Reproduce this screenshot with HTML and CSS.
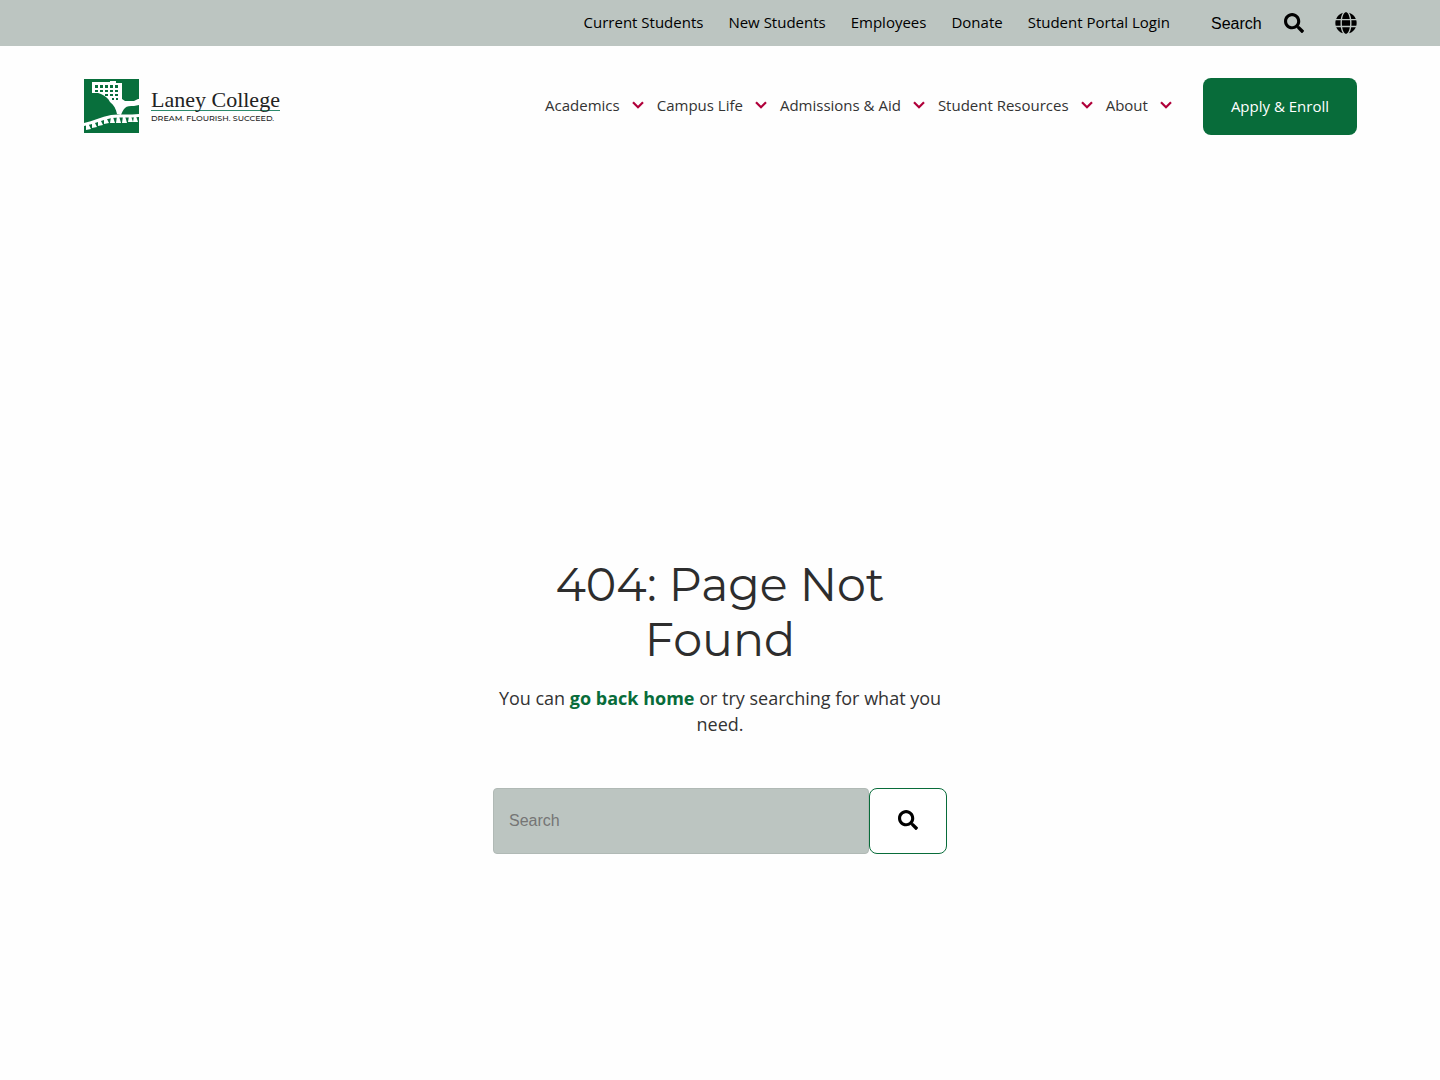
FILE: index.html
```html
<!DOCTYPE html>
<html lang="en">
<head>
    <meta charset="UTF-8">
    <meta name="viewport" content="width=device-width, initial-scale=1.0">
    <title>Page Not Found | Laney College</title>
    <link rel="stylesheet" href="styles.css">
</head>
<body>
    <svg class="sprite" aria-hidden="true">
        <symbol id="icon-search" viewBox="0 0 512 512">
            <path d="M505 442.700 405.300 343c-4.500-4.500-10.600-7-17-7H372c27.600-35.300 44-79.700 44-128C416 93.100 322.900 0 208 0S0 93.100 0 208s93.100 208 208 208c48.300 0 92.700-16.400 128-44v16.300c0 6.400 2.500 12.500 7 17l99.700 99.700c9.400 9.400 24.600 9.400 33.900 0l28.300-28.300c9.400-9.400 9.400-24.600.1-34zM208 336c-70.700 0-128-57.200-128-128 0-70.700 57.200-128 128-128 70.700 0 128 57.200 128 128 0 70.700-57.200 128-128 128z"/>
        </symbol>
        <symbol id="icon-chevron" viewBox="0 0 12 8">
            <path d="M1 1.200 6 6.200 11 1.200" fill="none" stroke="currentColor" stroke-width="2.200"/>
        </symbol>
    </svg>

    <div class="top-bar">
        <nav class="top-links" aria-label="Utility">
            <a href="#">Current Students</a>
            <a href="#">New Students</a>
            <a href="#">Employees</a>
            <a href="#">Donate</a>
            <a href="#">Student Portal Login</a>
        </nav>
        <form class="top-search">
            <input type="text" name="s" placeholder="Search" aria-label="Search the site">
            <button type="submit" aria-label="Submit site search"><svg class="icon"><use href="#icon-search"/></svg></button>
        </form>
        <button type="button" class="language" aria-label="Choose language">
            <svg viewBox="0 0 496 512">
                <path d="M336.500 160C322 70.700 287.800 8 248 8s-74 62.700-88.500 152h177zM152 256c0 22.200 1.200 43.500 3.300 64h185.300c2.100-20.500 3.300-41.800 3.300-64s-1.200-43.500-3.300-64H155.300c-2.100 20.500-3.300 41.800-3.300 64zm324.700-96c-28.600-67.900-86.500-120.400-158-141.600 24.400 33.800 41.200 84.700 50 141.600h108zM177.200 18.400C105.800 39.600 47.800 92.100 19.300 160h108c8.700-56.900 25.500-107.800 49.900-141.600zM487.400 192H372.700c2.100 21 3.300 42.500 3.300 64s-1.200 43-3.300 64h114.600c5.500-20.500 8.600-41.800 8.600-64s-3.100-43.500-8.500-64zM120 256c0-21.500 1.200-43 3.300-64H8.600C3.200 212.500 0 233.800 0 256s3.200 43.500 8.600 64h114.600c-2-21-3.200-42.500-3.200-64zm39.500 96c14.500 89.300 48.700 152 88.500 152s74-62.700 88.500-152h-177zm159.300 141.600c71.400-21.200 129.400-73.700 158-141.600h-108c-8.800 56.900-25.600 107.800-50 141.600zM19.300 352c28.600 67.900 86.500 120.400 158 141.600-24.400-33.800-41.200-84.700-50-141.600h-108z"/>
            </svg>
        </button>
    </div>

    <header class="site-header">
        <a href="#" class="logo">
            <svg class="logo-mark" viewBox="0 0 56 56" aria-hidden="true">
                <rect x="1" y="1" width="55" height="54" fill="#086f3c"/>
                <g fill="#fff">
                    <!-- tower and lawn -->
                    <path d="M9 4h18V3h6v2h6v16l3 2h9l4-2h1v6l-5 1c-4 0-7 0-9 2s-3 4-4 7l-4-1c-1-5-3-9-7-12-2-4-5-6-9-8l-3-1H9z"/>
                    <!-- bridge -->
                    <path d="M1 45c9-2 17-6 27-8 9-1 19 0 28-1v3c-10 1-18 0-27 1-10 2-18 6-28 8z"/>
                    <path d="m3 46 2-1 3 6-5 1zM9 44l2-1 3 6-5 1zM15 42l2-1 3 6-5 1zM21 40l2-1 3 6-5 1zM28 39h2l2 6h-5zM34 38h2l2 7h-5zM40 38h2l2 7h-5zM46 38h2l2 6h-5zM51 38h2l2 6h-5z"/>
                </g>
                <path d="M12 7h3v3h-3zM17 7h3v3h-3zM22 7h3v3h-3zM27 7h3v3h-3zM32 7h3v3h-3zM12 12h3v2h-3zM17 12h3v2h-3zM22 12h3v2h-3zM27 12h3v2h-3zM32 12h3v2h-3zM22 16h3v2h-3zM27 16h3v2h-3zM32 16h3v2h-3zM29 20h2v2h-2zM33 20h2v2h-2z" fill="#086f3c"/>
            </svg>
            <span class="logo-text">
                <span class="logo-name">Laney College</span>
                <span class="logo-tagline">DREAM. FLOURISH. SUCCEED.</span>
            </span>
        </a>
        <nav class="main-nav" aria-label="Main">
            <a href="#">Academics <svg><use href="#icon-chevron"/></svg></a>
            <a href="#">Campus Life <svg><use href="#icon-chevron"/></svg></a>
            <a href="#">Admissions &amp; Aid <svg><use href="#icon-chevron"/></svg></a>
            <a href="#">Student Resources <svg><use href="#icon-chevron"/></svg></a>
            <a href="#">About <svg><use href="#icon-chevron"/></svg></a>
        </nav>
        <a href="#" class="apply-button">Apply &amp; Enroll</a>
    </header>

    <main>
        <div class="not-found">
            <h1>404: Page Not Found</h1>
            <p>You can <a href="#">go back home</a> or try searching for what you need.</p>
            <form class="search-form">
                <input type="text" name="q" placeholder="Search" aria-label="Search">
                <button type="submit" aria-label="Submit search"><svg class="icon"><use href="#icon-search"/></svg></button>
            </form>
        </div>
    </main>
</body>
</html>
```
FILE: styles.css
```css
* {
    box-sizing: border-box;
}
body {
    margin: 0;
    min-height: 100vh;
    display: flex;
    flex-direction: column;
    font-family: "Open Sans", sans-serif;
    font-size: 15px;
    line-height: 24px;
    color: #333;
    background-color: #fefefe;
}
a {
    color: inherit;
    text-decoration: none;
}
button {
    padding: 0;
    border: 0;
    background: none;
    cursor: pointer;
}
svg {
    display: block;
}
input {
    font-family: "Liberation Sans", Arial, sans-serif;
    font-size: 16px;
}
.sprite {
    position: absolute;
    width: 0;
    height: 0;
}
.icon {
    width: 20px;
    height: 20px;
}

/* top bar */
.top-bar {
    display: flex;
    align-items: center;
    justify-content: flex-end;
    height: 46px;
    padding: 0 83px;
    color: #000;
    background-color: #bcc5c1;
}
.top-links {
    display: flex;
    gap: 25px;
    padding-bottom: 2px;
}
.top-search {
    display: flex;
    align-items: center;
    margin: 0 31px 0 41px;
}
.top-search input {
    width: 73px;
    padding: 1px 0 0;
    border: 0;
    background: none;
}
.top-search input::placeholder {
    color: #000;
}
.language svg {
    width: 22px;
    height: 22px;
}

/* header */
.site-header {
    display: flex;
    align-items: center;
    padding: 32px 83px;
}
.logo {
    display: flex;
    align-items: center;
    align-self: flex-start;
    gap: 12px;
    margin-right: auto;
}
.logo-mark {
    width: 56px;
    height: 56px;
}
.logo-text {
    display: flex;
    flex-direction: column;
    padding-top: 2px;
    color: #222;
}
.logo-name {
    border-bottom: 1px solid #2c8a6c;
    font-family: "Liberation Serif", serif;
    font-size: 22px;
    line-height: 20px;
}
.logo-tagline {
    font-family: Montserrat, sans-serif;
    font-size: 8px;
    font-weight: 500;
    line-height: 14px;
}
.main-nav {
    display: flex;
    gap: 13px;
    margin-right: 31px;
    padding-bottom: 3px;
}
.main-nav a {
    display: flex;
    align-items: center;
    gap: 12px;
}
.main-nav svg {
    width: 12px;
    height: 8px;
    color: #b0003a;
}
.apply-button {
    padding: 16px 28px 17px;
    border-radius: 8px;
    color: #fff;
    background-color: #086c3a;
}

/* 404 message */
main {
    flex: 1;
    display: flex;
    align-items: center;
    justify-content: center;
    padding-top: 164px;
}
.not-found {
    width: 454px;
    text-align: center;
}
h1 {
    margin: 0 0 18px;
    padding: 0 48px;
    font-family: Montserrat, sans-serif;
    font-size: 46px;
    font-weight: 400;
    line-height: 55px;
    color: #2d2d2d;
}
.not-found p {
    margin: 0 0 51px;
    font-size: 18px;
    line-height: 26px;
}
.not-found p a {
    font-weight: 700;
    color: #086c3a;
}
.search-form {
    display: flex;
}
.search-form input {
    flex: 1;
    min-width: 0;
    height: 66px;
    padding: 0 15px;
    border: 1px solid #b0b9b5;
    border-radius: 4px;
    background-color: #bcc5c1;
}
.search-form input::placeholder {
    color: #757575;
}
.search-form button {
    display: flex;
    align-items: center;
    justify-content: center;
    width: 78px;
    padding-bottom: 2px;
    border: 1px solid #086c3a;
    border-radius: 8px;
    background-color: #fff;
}
```
